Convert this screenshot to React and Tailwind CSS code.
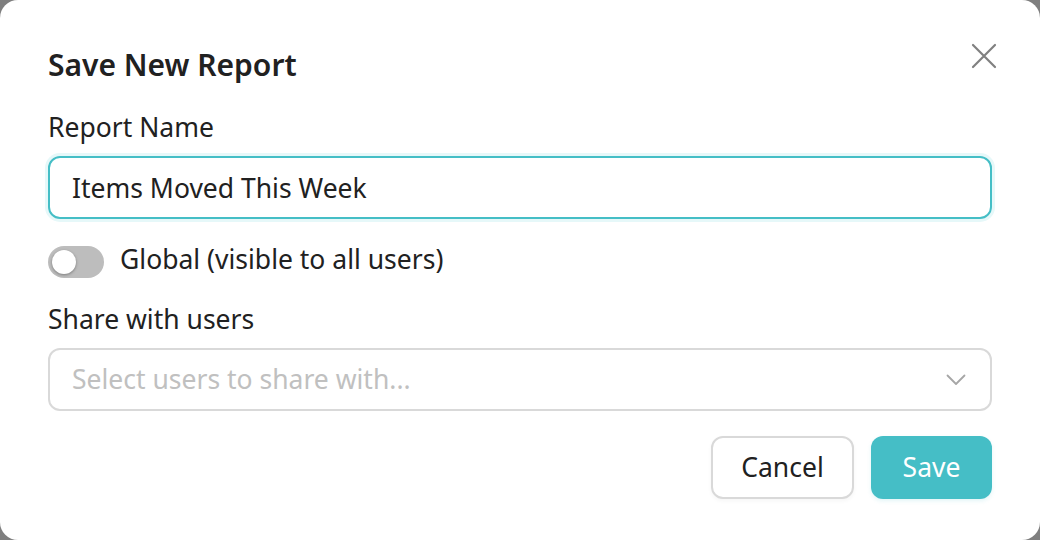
import { useState } from 'react'

export default function App() {
  const [name, setName] = useState('Items Moved This Week')
  const [global, setGlobal] = useState(false)

  return (
    <div className="w-[1040px] h-[540px] bg-[#7f7f7f]" style={{ fontFamily: '"Noto Sans", "Open Sans", sans-serif' }}>
      <div className="relative w-full h-full bg-white rounded-[18px] px-[48px] pt-[46px] text-[#212121]">

        {/* Close */}
        <button className="absolute top-[42px] right-[42px] w-[28px] h-[28px] flex items-center justify-center text-[#808080]">
          <svg width="26" height="26" viewBox="0 0 26 26" fill="none" stroke="currentColor" strokeWidth="2.2" strokeLinecap="round">
            <path d="M2 2 L24 24 M24 2 L2 24" />
          </svg>
        </button>

        <h2 className="text-[30px] leading-[38px] font-semibold">Save New Report</h2>

        <label className="block mt-[26px] text-[26.5px] leading-[34px]">Report Name</label>
        <div className="mt-[12px] rounded-[12px] ring-[3px] ring-[#e6f8f9]">
          <input
            value={name}
            onChange={e => setName(e.target.value)}
            className="w-full h-[63px] px-[22px] text-[26.5px] border-2 border-[#45bec6] rounded-[12px] outline-none text-[#212121]"
          />
        </div>

        {/* Global toggle */}
        <div className="mt-[27px] flex items-center gap-[16px]">
          <button
            onClick={() => setGlobal(!global)}
            className={`relative w-[56px] h-[32px] rounded-full ${global ? 'bg-[#45bec6]' : 'bg-[#bdbdbd]'}`}
          >
            <span className={`absolute top-[4px] w-[24px] h-[24px] rounded-full bg-white shadow-[0_1px_3px_rgba(0,0,0,0.35)] ${global ? 'left-[28px]' : 'left-[4px]'}`} />
          </button>
          <span className="text-[26.5px] leading-[34px] -mt-[6px]">Global (visible to all users)</span>
        </div>

        <label className="block mt-[24px] text-[26.5px] leading-[34px]">Share with users</label>
        <div className="mt-[12px] h-[63px] border-2 border-[#d9d9d9] rounded-[12px] flex items-center justify-between pl-[22px] pr-[24px]">
          <span className="text-[26.5px] text-[#c0c0c0]">Select users to share with...</span>
          <svg width="20" height="12" viewBox="0 0 20 12" fill="none" stroke="#a6a6a6" strokeWidth="1.8" strokeLinecap="round" strokeLinejoin="round">
            <path d="M1.5 1.5 L10 10 L18.5 1.5" />
          </svg>
        </div>

        <div className="mt-[25px] flex justify-end gap-[17px]">
          <button className="w-[143px] h-[63px] border-2 border-[#d9d9d9] rounded-[12px] text-[26.5px] text-[#212121] bg-white shadow-[0_2px_4px_rgba(0,0,0,0.04)]">
            Cancel
          </button>
          <button className="w-[121px] h-[63px] rounded-[12px] bg-[#45bec6] text-[26.5px] text-white shadow-[0_2px_4px_rgba(69,190,198,0.15)]">
            Save
          </button>
        </div>
      </div>
    </div>
  )
}
